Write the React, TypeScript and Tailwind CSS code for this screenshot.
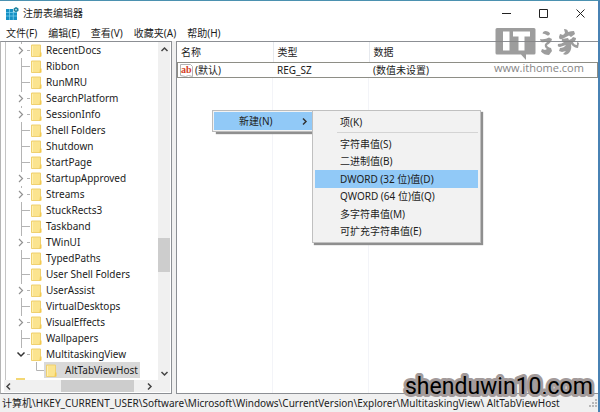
import React from 'react';

interface TreeItem {
  name: string;
  state: 'leaf' | 'closed' | 'open';
}

const menus = ['文件(F)', '编辑(E)', '查看(V)', '收藏夹(A)', '帮助(H)'];

const treeItems: TreeItem[] = [
  { name: 'RecentDocs', state: 'closed' },
  { name: 'Ribbon', state: 'leaf' },
  { name: 'RunMRU', state: 'leaf' },
  { name: 'SearchPlatform', state: 'closed' },
  { name: 'SessionInfo', state: 'closed' },
  { name: 'Shell Folders', state: 'leaf' },
  { name: 'Shutdown', state: 'leaf' },
  { name: 'StartPage', state: 'leaf' },
  { name: 'StartupApproved', state: 'closed' },
  { name: 'Streams', state: 'closed' },
  { name: 'StuckRects3', state: 'leaf' },
  { name: 'Taskband', state: 'leaf' },
  { name: 'TWinUI', state: 'closed' },
  { name: 'TypedPaths', state: 'leaf' },
  { name: 'User Shell Folders', state: 'leaf' },
  { name: 'UserAssist', state: 'closed' },
  { name: 'VirtualDesktops', state: 'leaf' },
  { name: 'VisualEffects', state: 'closed' },
  { name: 'Wallpapers', state: 'leaf' },
  { name: 'MultitaskingView', state: 'open' },
];

const valueTypes = [
  '字符串值(S)',
  '二进制值(B)',
  'DWORD (32 位)值(D)',
  'QWORD (64 位)值(Q)',
  '多字符串值(M)',
  '可扩充字符串值(E)',
];

const chevrons = {
  up: 'M1.5 6 4.5 3 7.5 6',
  down: 'M1.5 3 4.5 6 7.5 3',
  left: 'M6 1.5 3 4.5 6 7.5',
  right: 'M3 1.5 6 4.5 3 7.5',
};

const Chevron: React.FC<{ dir: keyof typeof chevrons; className?: string }> = ({ dir, className = '' }) => (
  <svg viewBox="0 0 9 9" className={`w-[9px] h-[9px] shrink-0 ${className}`} fill="none" stroke="currentColor" strokeWidth="1.5">
    <path d={chevrons[dir]} />
  </svg>
);

const FolderIcon: React.FC = () => (
  <svg viewBox="0 0 11 13" className="w-[11px] h-[13px] shrink-0">
    <path d="M.5 1h9v11.500H.5z" fill="#fbe48f" stroke="#efd070" />
    <path d="M9 8.500h1.500v4H8.500z" fill="#f3c94f" />
    <path d="M1.500 2v10" stroke="#fff0b4" />
  </svg>
);

const RegeditIcon: React.FC = () => (
  <svg viewBox="0 0 13 13" className="w-[13px] h-[13px]">
    <path d="M0 2h7v3h4v8H0z" fill="#1590c4" />
    <path d="M0 5.500h11M0 9h11M3.500 2v11M7.300 4v9" stroke="#7fd4f2" strokeWidth=".7" />
    <path d="M10 0l2.500 1.500v2.500L10 5.200 7.600 4V1.500z" fill="#1c7f9c" />
    <circle cx="10" cy="2.600" r=".9" fill="#b9ecf8" />
  </svg>
);

const StringIcon: React.FC = () => (
  <svg viewBox="0 0 13 13" className="w-[13px] h-[13px] shrink-0">
    <path d="M.5.5h10l2 2v10l-4-1-3 1-5-1z" fill="#fff" stroke="#b4b4b4" />
    <text x="1" y="9" fontSize="10" fontWeight="bold" fill="#d3401f" fontFamily="Liberation Serif, serif">ab</text>
  </svg>
);

const TreeRow: React.FC<{ item: TreeItem }> = ({ item }) => (
  <li className="flex items-center h-4">
    <span className="flex items-center w-[25px] h-full pl-[9px] shrink-0">
      {item.state === 'leaf' ? (
        <svg viewBox="0 0 16 16" className="w-4 h-4" stroke="#b4b4b4">
          <path d="M6.500 0v16M7 8.500h8" />
        </svg>
      ) : (
        <svg viewBox="0 0 16 16" className="w-4 h-4" fill="none">
          <path d="M6.500 0v2M12 8.500h3" stroke="#b4b4b4" />
          {item.state === 'closed' ? (
            <path d="M4 5l3.500 3.500L4 12" stroke="#929292" strokeWidth="1.200" />
          ) : (
            <path d="M2.500 6.500L6 10l3.500-3.500" stroke="#333" strokeWidth="1.500" />
          )}
        </svg>
      )}
    </span>
    <FolderIcon />
    <span className="pl-1">{item.name}</span>
  </li>
);

const TreePane: React.FC = () => (
  <div className="flex flex-col w-[172px] shrink-0 bg-white border border-[#8c8f94] border-l-[#b5b5b5]">
    <div className="flex flex-1">
      <ul className="flex-1 ml-1 border-l border-[#c4c4c4] overflow-hidden whitespace-nowrap">
        {treeItems.map((item) => (
          <TreeRow key={item.name} item={item} />
        ))}
        <li className="flex items-center h-4">
          <svg viewBox="0 0 14 16" className="w-[14px] h-4 ml-[24px] shrink-0" stroke="#b4b4b4" fill="none">
            <path d="M6.500 0v8.500H14" />
          </svg>
          <span className="flex items-center h-4 pl-[2px] pr-[2px] bg-[#d9d9d9]">
            <FolderIcon />
            <span className="pl-2">AltTabViewHost</span>
          </span>
        </li>
        {/* top of the next folder, scrolled out of view */}
        <li className="w-[9px] h-[2px] ml-[10px] bg-[#f3d774]" />
      </ul>
      <div className="flex flex-col items-center w-3 mr-px bg-[#f0f0f0] text-[#444]">
        <button aria-label="Scroll up" className="flex items-center justify-center h-[14px]">
          <Chevron dir="up" />
        </button>
        <div className="w-full h-[34px] mt-[182px] bg-[#cdcdcd]" />
        <button aria-label="Scroll down" className="flex items-center justify-center h-[14px] mt-auto">
          <Chevron dir="down" />
        </button>
      </div>
    </div>
    <div className="flex items-center h-3 ml-[3px] mr-px mb-px bg-[#f0f0f0] text-[#444]">
      <button aria-label="Scroll left">
        <Chevron dir="left" />
      </button>
      <div className="w-[73px] h-full ml-[48px] bg-[#cdcdcd]" />
      <button aria-label="Scroll right" className="ml-auto mr-4">
        <Chevron dir="right" />
      </button>
    </div>
  </div>
);

const ContextMenu: React.FC = () => (
  <div className="absolute top-[68px] left-[35px] flex items-start">
    <div className="w-[101px] h-[22px] p-px bg-[#f2f2f2] border border-r-0 border-[#bcbcbc] shadow-[4px_2px_1px_#8f8f8f]">
      <button className="flex items-center w-full h-full pl-[25px] pr-[3px] bg-[#91c9f7] text-[#333]">
        <span className="text-[#1c1c1c]">新建(N)</span>
        <Chevron dir="right" className="ml-auto" />
      </button>
    </div>
    <div className="w-[169px] -ml-px p-[2px] pt-px bg-[#f2f2f2] border border-[#c0c0c0] shadow-[2px_2px_1px_#8f8f8f]">
      <button className="block w-full h-5 pl-[25px] text-left">项(K)</button>
      <hr className="ml-[22px] mb-[2px] border-[#d4d4d4]" />
      <div className="flex flex-col h-[105px]">
        {valueTypes.map((type) => (
          <button
            key={type}
            className={`flex-1 flex items-center pl-[25px] ${type.startsWith('DWORD') ? 'bg-[#91c9f7]' : ''}`}
          >
            {type}
          </button>
        ))}
      </div>
    </div>
  </div>
);

const ValuesPane: React.FC = () => (
  <div className="relative flex flex-col flex-1 bg-white border border-r-0 border-[#8c8f94]">
    <table className="w-full table-fixed text-left">
      <colgroup>
        <col className="w-24" />
        <col className="w-24" />
        <col />
      </colgroup>
      <thead>
        <tr className="h-5">
          <th className="pl-1 font-normal border-r border-[#e6e9ee]">名称</th>
          <th className="pl-1 font-normal border-r border-[#e6e9ee]">类型</th>
          <th className="pl-1 font-normal">数据</th>
        </tr>
      </thead>
      <tbody>
        <tr className="h-4 outline outline-1 -outline-offset-1 outline-[#8e8e86]">
          <td className="pl-[3px]">
            <span className="flex items-center gap-[2px]">
              <StringIcon />
              (默认)
            </span>
          </td>
          <td className="pl-1">REG_SZ</td>
          <td className="pl-1">(数值未设置)</td>
        </tr>
      </tbody>
    </table>
    <div className="flex flex-1">
      <div className="w-24 border-r border-[#f3f4f8]" />
      <div className="w-24 border-r border-[#f3f4f8]" />
    </div>
    <ContextMenu />
  </div>
);

const IthomeMark: React.FC = () => (
  <div className="absolute top-[26px] right-[15px] w-[89px] text-[#858585]">
    <svg viewBox="0 0 89 34" className="w-full h-[34px] opacity-80" fill="currentColor">
      <path
        fillRule="evenodd"
        d="M3 1h37q1.500 0 1.500 1.500V26q0 1.500-1.500 1.500h-8V33l-5-5.500H3Q1.500 27.500 1.500 26V2.500Q1.500 1 3 1zM9 4.500v19h6.500v-19zM19 4.500v5h5.500v14h6V9.500H36v-5z"
      />
      <path d="M51 4q4 0 5 2.500-.5 2.500-2.500 2-3-2-5-2 0-2 2.500-2.500zM46 12q5 1 9-1.500l3 1.500q-1 4-5 6 0 2 4 3l1 3-3 4q-5 0-8-3.500l1-2.500 3 1 2-1q-3-2-2-5l3-3q-4 2-7 1z" />
      <path d="M70 2q4 0 4 3 3-1 6-1l1 3-4 3-2-1.500-7 3.500q-3 1-3-2l1-3 3 1 2-2zM68 12l6-1 1 2q3-1 4-3l3 1q0 3-3 4 1 3 4 3v-3l2 1-1 5q-4 0-7-4 1 6-2 9-3 3-6 1l3-3-4 1-3-1 1-3q4 0 6-3l-6 2q-3 0-2-3 4 0 6-2-3 0-2-3z" />
    </svg>
    <div className="-mt-px text-[11px] leading-4 whitespace-nowrap font-['Open_Sans']">www.ithome.com</div>
  </div>
);

export default function App() {
  return (
    <div className="relative flex flex-col bg-white border-t border-r-2 border-t-[#4b91b0] border-r-[#4882b4] text-[10px] leading-4 text-[#1c1c1c] font-['Noto_Sans','Noto_Sans_CJK_SC',sans-serif]">
      <header className="flex items-center h-6 pl-[6px]">
        <RegeditIcon />
        <h1 className="pl-1">注册表编辑器</h1>
        <div className="flex items-center gap-7 ml-auto mr-[13px]">
          <button aria-label="Minimize">
            <svg viewBox="0 0 9 9" className="w-[9px] h-[9px]" stroke="#222">
              <path d="M0 4.500h9" />
            </svg>
          </button>
          <button aria-label="Maximize">
            <svg viewBox="0 0 9 9" className="w-[9px] h-[9px]" stroke="#222" fill="none">
              <path d="M.5.5h8v8h-8z" />
            </svg>
          </button>
          <button aria-label="Close">
            <svg viewBox="0 0 9 9" className="w-[9px] h-[9px]" stroke="#222">
              <path d="M.5.5l8 8M8.500.5l-8 8" />
            </svg>
          </button>
        </div>
      </header>
      <nav className="flex gap-[11px] h-4 pl-[6px]">
        {menus.map((menu) => (
          <button key={menu}>{menu}</button>
        ))}
      </nav>
      <main className="flex gap-1 bg-[#f0f0f0]">
        <TreePane />
        <ValuesPane />
      </main>
      <footer className="flex items-center justify-between h-[18px] pl-[2px] bg-[#f0f0f0] whitespace-nowrap">
        <span>计算机\HKEY_CURRENT_USER\Software\Microsoft\Windows\CurrentVersion\Explorer\MultitaskingView\ AltTabViewHost</span>
        <svg viewBox="0 0 9 9" className="w-[9px] h-[9px]" fill="#b8b8b8">
          <path d="M6 0h2v2H6zM3 3h2v2H3zM6 3h2v2H6zM0 6h2v2H0zM3 6h2v2H3zM6 6h2v2H6z" />
        </svg>
      </footer>
      <IthomeMark />
      <svg className="absolute bottom-[12px] right-[2px] w-[194px] h-[36px] overflow-visible">
        <text
          x="3"
          y="30"
          fontSize="23"
          fontFamily="Roboto, sans-serif"
          stroke="#a39b9b"
          strokeWidth="6"
          strokeLinejoin="round"
          paintOrder="stroke"
          fill="#000"
        >
          shenduwin10.com
        </text>
      </svg>
    </div>
  );
}
